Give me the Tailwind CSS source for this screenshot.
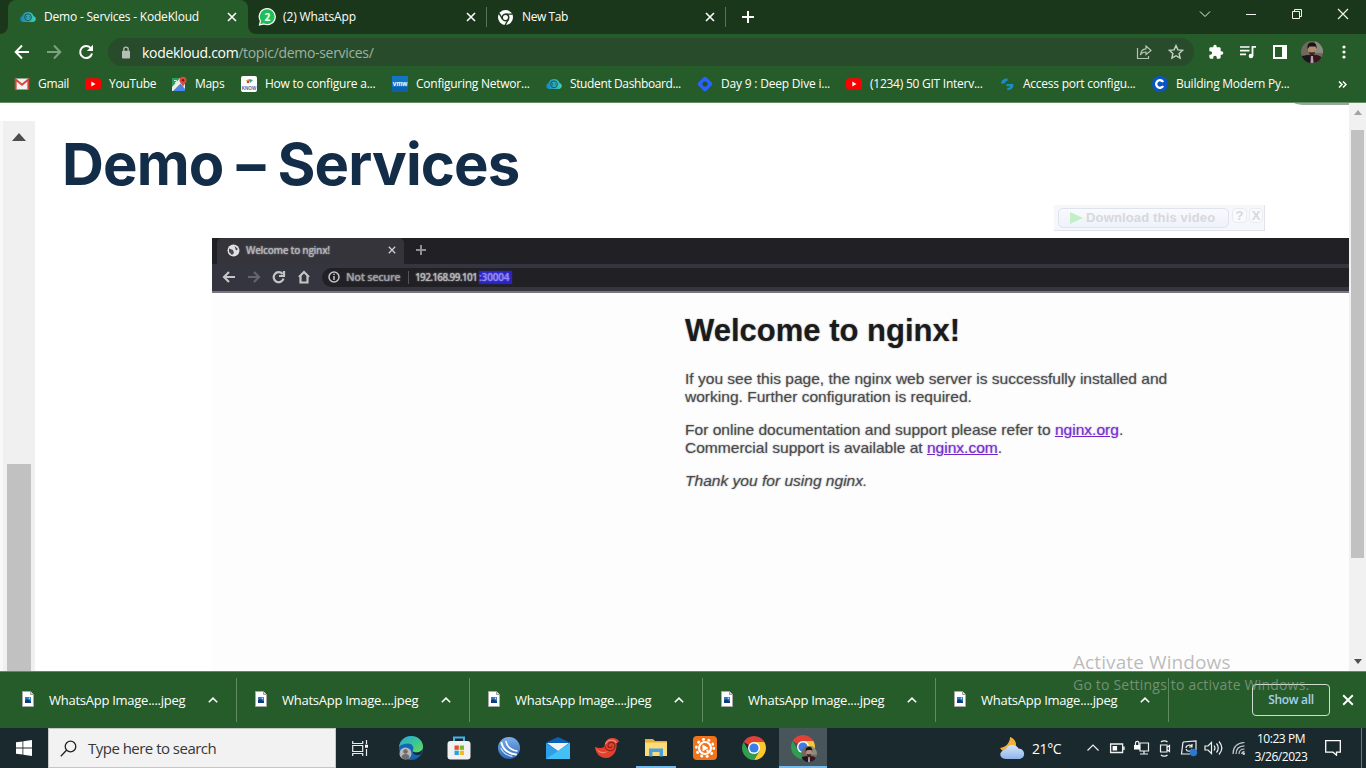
<!DOCTYPE html>
<html lang="en">
<head>
<meta charset="utf-8">
<title>Demo - Services - KodeKloud</title>
<script src="https://cdn.jsdelivr.net/npm/@tailwindcss/browser@4"></script>
</head>
<body class="w-[1366px] h-[768px] overflow-hidden relative bg-white flex flex-col font-['Open_Sans',sans-serif] text-white whitespace-nowrap">
<svg class="absolute w-0 h-0">
  <defs>
    <linearGradient id="kk" x1="0" x2="1"><stop offset="0" stop-color="#1583c4"/><stop offset="1" stop-color="#3fd0b8"/></linearGradient>
    <linearGradient id="edge" x1="0" y1="0" x2="1" y2="1"><stop offset="0" stop-color="#2aa7d8"/><stop offset=".6" stop-color="#3fc98c"/><stop offset="1" stop-color="#6bdc55"/></linearGradient>
    <linearGradient id="ball" x1="0" y1="0" x2="0" y2="1"><stop offset="0" stop-color="#7fb0e6"/><stop offset="1" stop-color="#2a68c0"/></linearGradient>
    <linearGradient id="cloudg" x1="0" y1="0" x2="0" y2="1"><stop offset="0" stop-color="#d5e6fb"/><stop offset="1" stop-color="#8fb4ea"/></linearGradient>
    <clipPath id="fc"><circle cx="11" cy="11" r="11"/></clipPath>
    <symbol id="kloud" viewBox="0 0 16 16"><path d="M3.500 13C1 13 .2 11.300.2 10 .2 8.500 1.200 7.500 2.300 7.200 3 4.600 5.300 3 8 3s5 1.600 5.700 4.200C15 7.500 15.800 8.500 15.800 10c0 1.500-1.100 3-3.300 3z" fill="url(#kk)"/><circle cx="8" cy="8.300" r="3.400" fill="none" stroke="#1f5b45" stroke-width="1"/><path d="M7 7.200 5.900 8.300 7 9.400M9 7.200l1.100 1.100L9 9.400" fill="none" stroke="#1f5b45" stroke-width=".8"/></symbol>
    <symbol id="x" viewBox="0 0 10 10"><path d="M1 1l8 8M9 1L1 9" stroke="currentColor" stroke-width="1.600" fill="none"/></symbol>
    <symbol id="yt" viewBox="0 0 16 16"><rect y="2.200" width="16" height="11.600" rx="3" fill="#f00"/><path d="M6.300 5.600v4.800L10.500 8z" fill="#fff"/></symbol>
    <symbol id="up" viewBox="0 0 10 6"><path d="M.8 5.300 5 1.200l4.200 4.100" stroke="currentColor" stroke-width="1.600" fill="none"/></symbol>
    <symbol id="file" viewBox="0 0 12 16"><path d="M.5.5h8l3 3v12H.5z" fill="#fff" stroke="#a9a9a9"/><path d="M8.500.5v3h3" fill="#ddd" stroke="#888" stroke-width=".8"/><rect x="3" y="6" width="6" height="6" fill="#2a7bd0"/><path d="M3 12V9.500L5 8l4 2.500V12z" fill="#123a73"/><circle cx="7.500" cy="7.300" r=".8" fill="#cde8ff"/></symbol>
    <symbol id="chrome" viewBox="0 0 24 24"><path d="M12 12 1.610 6A12 12 0 0 1 22.390 6z" fill="#e04236"/><path d="M22.390 6A12 12 0 0 1 12 24l5.200-9L12 6z" fill="#fbc82f"/><path d="M1.610 6A12 12 0 0 0 12 24l5.200-9L12 12 6.800 15z" fill="#2f9e4f"/><circle cx="12" cy="12" r="6" fill="#fff"/><circle cx="12" cy="12" r="4.600" fill="#3a7ce8"/></symbol>
    <symbol id="face" viewBox="0 0 22 22"><g clip-path="url(#fc)"><rect width="22" height="22" fill="#6f6a5c"/><rect x="14" width="8" height="12" fill="#8c8b80"/><path d="M0 22c0-7 5-8 9-8l5 0c5 0 8 2 8 8z" fill="#3a1220"/><path d="M0 22V15l8-1 2 8z" fill="#15171d"/><ellipse cx="11" cy="8.500" rx="4" ry="5.200" fill="#b48a74"/><path d="M6.500 8C6 3 8 1.500 11 1.500S16 3 15.500 8L14.500 5.500h-6z" fill="#161312"/><path d="M8 10.500c1 1.200 5 1.200 6 0 0 3-1.500 4-3 4s-3-1-3-4z" fill="#352722"/><path d="M10 15h2l.5 7h-3z" fill="#a9a5a8"/></g></symbol>
  </defs>
</svg>

<!-- Tab strip -->
<header class="h-[34px] shrink-0 bg-[#1b371b] flex items-stretch text-[12px]">
  <div class="w-[8px] bg-[#265c2a]"><div class="h-full bg-[#1b371b] rounded-br-[8px]"></div></div>
  <div class="w-[240px] bg-[#265c2a] rounded-t-[8px] flex items-center pl-[12px]">
    <svg class="w-[16px] h-[16px]"><use href="#kloud"/></svg>
    <span class="ml-[8px] w-[183px] tracking-[-0.2px]">Demo - Services - KodeKloud</span>
    <svg class="w-[10px] h-[10px]"><use href="#x"/></svg>
  </div>
  <div class="w-[239px] bg-[#265c2a]">
    <div class="h-full bg-[#1b371b] rounded-bl-[8px] flex items-center pl-[10px]">
      <svg class="w-[18px] h-[18px]" viewBox="0 0 18 18"><path d="M1.500 17 2.500 13A8 8 0 1 1 6 16z" fill="#1fbf55" stroke="#fff" stroke-width="1.200"/><text x="9.300" y="12.500" text-anchor="middle" font-size="10" font-weight="700" fill="#fff" font-family="Open Sans">2</text></svg>
      <span class="ml-[7px] w-[183px] tracking-[-0.13px]">(2) WhatsApp</span>
      <svg class="w-[10px] h-[10px]"><use href="#x"/></svg>
    </div>
  </div>
  <div class="flex items-center w-[239px]">
    <div class="w-px h-[20px] bg-[#58735a] mr-[11px] -ml-px"></div>
    <svg class="w-[15px] h-[15px]" viewBox="0 0 24 24"><circle cx="12" cy="12" r="12" fill="#fff"/><circle cx="12" cy="12" r="5.200" fill="#fff" stroke="#1b371b" stroke-width="2.400"/><path d="M12 6.500h11M7.200 14.700 1.700 5.400M16.800 14.700 11.500 24" stroke="#1b371b" stroke-width="2.200"/></svg>
    <span class="ml-[9px] w-[183px] tracking-[-0.4px]">New Tab</span>
    <svg class="w-[10px] h-[10px]"><use href="#x"/></svg>
  </div>
  <div class="flex items-center flex-1">
    <div class="w-px h-[20px] bg-[#58735a] -ml-px"></div>
    <svg class="w-[12px] h-[12px] ml-[16px]" viewBox="0 0 12 12"><path d="M6 0v12M0 6h12" stroke="#fff" stroke-width="2"/></svg>
  </div>
  <div class="flex items-start pt-[8px] w-[167px] text-[#eef3ee]">
    <svg class="w-[12px] h-[12px] mr-[34px]" viewBox="0 0 12 12"><path d="M1 3.500 6 8.500l5-5" stroke="currentColor" fill="none"/></svg>
    <svg class="w-[12px] h-[12px] mr-[34px]" viewBox="0 0 12 12"><path d="M1 6.500h10" stroke="currentColor" fill="none"/></svg>
    <svg class="w-[12px] h-[12px] mr-[34px]" viewBox="0 0 12 12"><path d="M1.500 3.500h7v7h-7zM3.500 3.500v-2h7v7h-2" stroke="currentColor" fill="none"/></svg>
    <svg class="w-[12px] h-[12px]" viewBox="0 0 12 12"><path d="M1 1l10 10M11 1 1 11" stroke="currentColor" stroke-width="1.200" fill="none"/></svg>
  </div>
</header>

<!-- Toolbar -->
<div class="h-[36px] shrink-0 bg-[#265c2a] flex items-center">
  <svg class="w-[16px] h-[16px] ml-[14px]" viewBox="0 0 16 16"><path d="M15 8H2M8 1.500 1.700 8 8 14.500" stroke="#fff" stroke-width="2" fill="none"/></svg>
  <svg class="w-[16px] h-[16px] ml-[16px]" viewBox="0 0 16 16"><path d="M1 8h13M8 1.500 14.300 8 8 14.500" stroke="#7fa081" stroke-width="2" fill="none"/></svg>
  <svg class="w-[16px] h-[16px] ml-[16px]" viewBox="0 0 16 16"><path d="M13 4.500A6 6 0 1 0 14 9.500" stroke="#fff" stroke-width="2" fill="none"/><path d="M15 .8V7H8.800z" fill="#fff"/></svg>
  <div class="ml-[14px] w-[1086px] h-[28px] rounded-full bg-[#284b2b] flex items-center pl-[13px] pr-[10px] text-[14px]">
    <svg class="w-[10px] h-[13px]" viewBox="0 0 10 13"><rect x="1" y="4.800" width="8" height="7.600" rx="1" fill="#b5bfb6"/><path d="M2.800 5V3.300a2.200 2.200 0 0 1 4.400 0V5" stroke="#b5bfb6" stroke-width="1.300" fill="none"/></svg>
    <span class="ml-[11px] tracking-[-0.32px] flex-1">kodekloud.com<span class="text-[#9fb1a1]">/topic/demo-services/</span></span>
    <svg class="w-[16px] h-[16px]" viewBox="0 0 16 16"><path d="M1.500 4v10.500h11V12M10 2l5 4.500-5 4V8C7 8 5.500 9 4.500 11 4.800 7 7 5 10 4.800z" fill="none" stroke="#b3c4b4" stroke-width="1.200"/></svg>
    <svg class="w-[16px] h-[16px] ml-[16px]" viewBox="0 0 16 16"><path d="m8 1.600 1.900 4.300 4.700.5-3.500 3.100 1 4.600L8 11.700l-4.100 2.400 1-4.600-3.500-3.100 4.700-.5z" fill="none" stroke="#c5d3c6" stroke-width="1.400"/></svg>
  </div>
  <svg class="w-[16px] h-[16px] ml-[14px]" viewBox="0 0 24 24"><path d="M20.500 11H19V7c0-1.100-.9-2-2-2h-4V3.500a2.500 2.500 0 0 0-5 0V5H4c-1.100 0-2 .9-2 2v3.800h1.500a2.700 2.700 0 0 1 0 5.400H2V20c0 1.100.9 2 2 2h3.800v-1.500a2.700 2.700 0 0 1 5.400 0V22H17c1.100 0 2-.9 2-2v-4h1.500a2.500 2.500 0 0 0 0-5z" fill="#fff"/></svg>
  <svg class="w-[16px] h-[14px] ml-[16px]" viewBox="0 0 16 14"><path d="M0 2h9.500M0 5.700h9.500M0 9.400h6" stroke="#fff" stroke-width="1.700"/><path d="M12.500 11V1.800H16" stroke="#fff" stroke-width="1.800" fill="none"/><circle cx="11" cy="11" r="2.300" fill="#fff"/></svg>
  <svg class="w-[14px] h-[14px] ml-[17px]" viewBox="0 0 14 14"><path d="M0 0h14v14H0zM2 2v10h7V2z" fill="#fff" fill-rule="evenodd"/></svg>
  <svg class="w-[22px] h-[22px] ml-[14px]"><use href="#face"/></svg>
  <svg class="w-[4px] h-[14px] ml-[19px]" viewBox="0 0 4 14" fill="#fff"><circle cx="2" cy="2" r="1.600"/><circle cx="2" cy="7" r="1.600"/><circle cx="2" cy="12" r="1.600"/></svg>
</div>

<!-- Bookmarks -->
<nav class="h-[33px] shrink-0 bg-[#265c2a] border-b border-[#5f8b62] flex items-center pl-[14px] pb-[4px] text-[12px]">
  <a class="flex items-center gap-[8px] w-[71px]"><svg class="w-[16px] h-[16px]" viewBox="0 0 16 16"><rect x="1" y="2.500" width="14" height="11" rx="1" fill="#f2f2f2"/><path d="M1.700 13.500V3.600L8 8.700l6.300-5.100v9.900" fill="none" stroke="#d9443a" stroke-width="1.900"/></svg><span class="tracking-[-0.3px]">Gmail</span></a>
  <a class="flex items-center gap-[8px] w-[86px]"><svg class="w-[16px] h-[16px]"><use href="#yt"/></svg><span class="tracking-[-0.3px]">YouTube</span></a>
  <a class="flex items-center gap-[8px] w-[70px]"><svg class="w-[16px] h-[16px]" viewBox="0 0 16 16"><rect x="1" y="2" width="13" height="13" rx="1" fill="#e5e8ea"/><path d="M1 2h8L1 11z" fill="#27a05b"/><path d="M1 15 9 7l5 6v2z" fill="#4a86e8"/><path d="M1 12 9.500 3.500l2 2L2 15H1z" fill="#f4f0e0"/><path d="M3 4.500h2.500v2H4" stroke="#d8efdf" fill="none"/><path d="M12 11C11 8 8.500 7 8.500 4.200a3.500 3.500 0 0 1 7 0C15.500 7 13 8 12 11z" fill="#dd4b3e"/><circle cx="12" cy="4.200" r="1.300" fill="#7c1d16"/></svg><span class="tracking-[-0.3px]">Maps</span></a>
  <a class="flex items-center gap-[8px] w-[151px]"><svg class="w-[16px] h-[16px]" viewBox="0 0 16 16"><rect width="16" height="16" rx="2" fill="#fff"/><path d="M4 4.500 8 3.200l2 2z" fill="#e58d3a"/><path d="M8 3l4 1-3 3z" fill="#2aa58b"/><circle cx="7" cy="6" r="1.300" fill="#cf3d4e"/><text x="8" y="13.500" font-size="4.600" font-weight="700" text-anchor="middle" fill="#5a6690" font-family="Liberation Sans">KNOW</text></svg><span class="tracking-[-0.23px]">How to configure a...</span></a>
  <a class="flex items-center gap-[8px] w-[154px]"><svg class="w-[16px] h-[16px]" viewBox="0 0 16 16"><rect width="16" height="16" fill="#1473c2"/><rect y="11" width="16" height="5" fill="#0d60aa"/><text x="8" y="10" font-size="6.500" font-weight="700" text-anchor="middle" fill="#fff" font-family="Liberation Sans">vmw</text></svg><span class="tracking-[-0.25px]">Configuring Networ...</span></a>
  <a class="flex items-center gap-[8px] w-[151px]"><svg class="w-[16px] h-[16px]"><use href="#kloud"/></svg><span class="tracking-[-0.38px]">Student Dashboard...</span></a>
  <a class="flex items-center gap-[8px] w-[149px]"><svg class="w-[16px] h-[16px]" viewBox="0 0 16 16"><rect x="2.300" y="2.300" width="11.400" height="11.400" rx="2" transform="rotate(45 8 8)" fill="#2962ff"/><circle cx="8" cy="8" r="2.600" fill="#24502c"/></svg><span class="tracking-[-0.2px]">Day 9 : Deep Dive i...</span></a>
  <a class="flex items-center gap-[8px] w-[154px]"><svg class="w-[16px] h-[16px]"><use href="#yt"/></svg><span class="tracking-[-0.25px]">(1234) 50 GIT Interv...</span></a>
  <a class="flex items-center gap-[7px] w-[152px]"><svg class="w-[16px] h-[16px]" viewBox="0 0 16 16"><path d="M1 7.500C1.300 4 4 2.500 7.500 2.500V5C5.500 5 5 6 4.800 7.500zM6.500 8h6.800c.4 4-1.800 6.200-6 6.200V12c2 0 2.700-.5 2.700-1.700H6.500z" fill="#1b8fc4"/></svg><span class="tracking-[-0.25px]">Access port configu...</span></a>
  <a class="flex items-center gap-[8px] w-[186px]"><svg class="w-[16px] h-[16px]" viewBox="0 0 16 16"><circle cx="8" cy="8" r="8" fill="#0b53c6"/><path d="M11.200 6A3.800 3.800 0 1 0 11.200 10" fill="none" stroke="#fff" stroke-width="2.300"/></svg><span class="tracking-[-0.25px]">Building Modern Py...</span></a>
  <svg class="w-[9px] h-[7px]" viewBox="0 0 9 7"><path d="M1 .5 4 3.500 1 6.500M5 .5l3 3-3 3" fill="none" stroke="#fff" stroke-width="1.500"/></svg>
</nav>

<!-- Page -->
<main class="h-[568px] shrink-0 flex text-black relative overflow-hidden">
  <aside class="w-[35px] mt-[18px] pl-[3px] bg-[#f8f8f9]">
    <div class="h-full bg-[#f0f0f0] flex flex-col justify-between items-start">
      <svg class="w-[14px] h-[8px] mt-[12px] ml-[9px]" viewBox="0 0 14 8"><path d="M0 8 7 0l7 8z" fill="#4d4d4d"/></svg>
      <div class="w-[24px] h-[207px] ml-[4px] bg-[#c1c1c1]"></div>
    </div>
  </aside>
  <section class="w-[1314px]">
    <h1 class="h-[135px] pl-[27px] pt-[26px] font-['Inter',sans-serif] font-bold text-[58px] leading-[70px] tracking-[-0.85px] text-[#132c47]">Demo – Services</h1>
    <div class="ml-[177px] h-[433px] bg-[#fdfdfe] overflow-hidden">
      <div class="h-[26px] bg-[#212025] flex items-stretch text-[10px] text-[#bcbcc0]/80">
        <div class="ml-[5px] w-[187px] bg-[#35343b] rounded-t-[5px] flex items-center pl-[10px] pb-[2px]">
          <svg class="w-[13px] h-[13px]" viewBox="0 0 13 13"><circle cx="6.500" cy="6.500" r="6" fill="#e0e0e2"/><path d="M2 4.500 6 6l1 3-2 2-3-3zM7.500 2l3.500 3-2 1.500z" fill="#4a494f"/></svg>
          <span class="ml-[6px] w-[142px] tracking-[-0.3px] font-semibold [text-shadow:0_0_1.5px_#bcbcc0]">Welcome to nginx!</span>
          <svg class="w-[8px] h-[8px] text-[#d0d0d4]"><use href="#x"/></svg>
        </div>
        <svg class="w-[10px] h-[10px] mt-[7px] ml-[12px]" viewBox="0 0 10 10"><path d="M5 0v10M0 5h10" stroke="#8f8f93" stroke-width="2"/></svg>
      </div>
      <div class="h-[29px] bg-[#35353f] border-b-2 border-[#77767c] flex items-center pb-px text-[#c8c8cc] text-[11px]">
        <svg class="w-[92px] h-[14px] ml-[10px]" viewBox="0 0 92 14"><g fill="none" stroke="#c5c5c9" stroke-width="2.200"><path d="M13 7H2M7 2 2 7l5 5"/><path d="M26 7h10M32 2l5 5-5 5" stroke="#66656d"/><path d="M60.500 4a5 5 0 1 0 1 4.500M62 1v5h-5"/><path d="M77 7l5-5 5 5M78.500 6v6.500h7V6"/></g></svg>
        <div class="ml-[8px] flex-1 h-[19px] rounded-l-full bg-[#212025] flex items-center pl-[6px]">
          <svg class="w-[12px] h-[12px]" viewBox="0 0 12 12"><circle cx="6" cy="6" r="5" fill="none" stroke="#c5c5c9" stroke-width="1.500"/><path d="M6 5v4M6 2.800v1.300" stroke="#c5c5c9" stroke-width="1.500"/></svg>
          <span class="ml-[6px] w-[62px] tracking-[-0.35px] font-semibold [text-shadow:0_0_1.5px_#a8a8ac] text-[#a8a8ac]/80">Not secure</span>
          <span class="w-px h-[13px] bg-[#55545c]"></span>
          <span class="ml-[6px] w-[64px] text-[10px] tracking-[-0.65px] font-semibold text-[#c0c0c4]/80 [text-shadow:0_0_1.5px_#c0c0c4]">192.168.99.101</span>
          <span class="w-[33px] h-[13px] leading-[13px] bg-[#2a22c4] shadow-[0_0_1px_#2a22c4] text-[10px] tracking-[-0.15px] font-semibold text-[#9a94f0]/80 [text-shadow:0_0_1.5px_#9a94f0]">:30004</span>
        </div>
      </div>
      <article class="pl-[473px] pt-[20px] font-['Liberation_Sans',sans-serif] text-[15.55px] leading-[18px] text-[#3a3a3c]/85 [text-shadow:0_0_1.5px_#00000080]">
        <h2 class="text-[31px] leading-[36px] font-bold text-[#0c0c0e]/90">Welcome to nginx!</h2>
        <p class="mt-[21px]">If you see this page, the nginx web server is successfully installed and<br>working. Further configuration is required.</p>
        <p class="mt-[15px]">For online documentation and support please refer to <a class="underline text-[#6a1bc4]/85 [text-shadow:0_0_1.5px_#6a1bc4b0]">nginx.org</a>.<br>Commercial support is available at <a class="underline text-[#6a1bc4]/85 [text-shadow:0_0_1.5px_#6a1bc4b0]">nginx.com</a>.</p>
        <p class="mt-[15px] italic">Thank you for using nginx.</p>
      </article>
    </div>
  </section>
  <aside class="w-[17px] bg-[#f1f1f1] flex flex-col items-center">
    <svg class="w-[8px] h-[5px] mt-[7px]" viewBox="0 0 8 5"><path d="M0 5 4 0l4 5z" fill="#a3a3a3"/></svg>
    <div class="w-[13px] h-[428px] mt-[15px] bg-[#c1c1c1]"></div>
    <svg class="w-[8px] h-[5px] mt-[101px]" viewBox="0 0 8 5"><path d="M0 0h8L4 5z" fill="#505050"/></svg>
  </aside>
  <!-- corner of the page's floating header -->
  <svg class="absolute left-[1294px] top-0 w-[55px] h-[3px]" viewBox="0 0 55 3"><path d="M0 0h55v2H12C7 2 3 1.500 0 0z" fill="#a0a3a0"/></svg>
  <!-- download helper floating over the video -->
  <div class="absolute left-[1054px] top-[102px] w-[211px] h-[26px] bg-[#f6f7fb] border-r border-b border-[#e0e2ec] flex items-start pl-[4px] pt-[3px] font-['Liberation_Sans',sans-serif] font-bold text-[13px] text-[#d6d8de]">
    <div class="w-[171px] h-[20px] rounded-[5px] border border-[#dde4f0] bg-linear-to-b from-[#f9fafd] to-[#eef2fa] flex items-center pl-[11px]">
      <svg class="w-[13px] h-[12px]" viewBox="0 0 13 12"><path d="M0 0 13 6 0 12z" fill="#c3efc6"/></svg>
      <span class="ml-[3px] tracking-[0.15px]">Download this video</span>
    </div>
    <div class="ml-[3px] w-[15px] h-[15px] rounded border border-[#e9ebf1] bg-[#f9fafc] text-center leading-[14px]">?</div>
    <div class="ml-[2px] w-[14px] h-[15px] rounded border border-[#e9ebf1] bg-[#f9fafc] text-center leading-[13px]">X</div>
  </div>
</main>

<!-- Download shelf -->
<div class="h-[57px] shrink-0 bg-[#265c2a] border-t border-[#5f8b62] flex items-center text-[13px]">
  <div class="w-[237px] h-[44px] border-r border-[#5f8b62] flex items-center pl-[22px]"><svg class="w-[12px] h-[16px] -mt-[3px]"><use href="#file"/></svg><span class="ml-[15px] mt-[2px] w-[159px] tracking-[-0.26px]">WhatsApp Image....jpeg</span><svg class="w-[10px] h-[6px]"><use href="#up"/></svg></div>
  <div class="w-[233px] h-[44px] border-r border-[#5f8b62] flex items-center pl-[18px]"><svg class="w-[12px] h-[16px] -mt-[3px]"><use href="#file"/></svg><span class="ml-[15px] mt-[2px] w-[159px] tracking-[-0.26px]">WhatsApp Image....jpeg</span><svg class="w-[10px] h-[6px]"><use href="#up"/></svg></div>
  <div class="w-[233px] h-[44px] border-r border-[#5f8b62] flex items-center pl-[18px]"><svg class="w-[12px] h-[16px] -mt-[3px]"><use href="#file"/></svg><span class="ml-[15px] mt-[2px] w-[159px] tracking-[-0.26px]">WhatsApp Image....jpeg</span><svg class="w-[10px] h-[6px]"><use href="#up"/></svg></div>
  <div class="w-[233px] h-[44px] border-r border-[#5f8b62] flex items-center pl-[18px]"><svg class="w-[12px] h-[16px] -mt-[3px]"><use href="#file"/></svg><span class="ml-[15px] mt-[2px] w-[159px] tracking-[-0.26px]">WhatsApp Image....jpeg</span><svg class="w-[10px] h-[6px]"><use href="#up"/></svg></div>
  <div class="w-[233px] h-[44px] border-r border-[#5f8b62] flex items-center pl-[18px]"><svg class="w-[12px] h-[16px] -mt-[3px]"><use href="#file"/></svg><span class="ml-[15px] mt-[2px] w-[159px] tracking-[-0.26px]">WhatsApp Image....jpeg</span><svg class="w-[10px] h-[6px]"><use href="#up"/></svg></div>
  <button class="ml-[83px] w-[78px] h-[32px] -mt-px rounded-[4px] border border-[#cfdccf] text-[12px] font-semibold text-[#a8d0ee] tracking-[-0.3px]">Show all</button>
  <svg class="w-[12px] h-[12px] ml-[12px]"><use href="#x"/></svg>
</div>

<!-- Taskbar -->
<footer class="h-[40px] shrink-0 bg-[#1a292e] flex items-stretch">
  <div class="w-[48px] flex items-center justify-center"><svg class="w-[16px] h-[16px]" viewBox="0 0 16 16"><path d="M0 2.300 6.500 1.400V7.600H0zM7.300 1.300 16 0v7.600H7.300zM0 8.400h6.500v6.200L0 13.700zM7.300 8.400H16V16L7.300 14.700z" fill="#fff"/></svg></div>
  <div class="w-[288px] bg-[#f2f2f2] border border-[#c4c6c7] flex items-center pl-[11px] text-[15px] text-[#33383b]">
    <svg class="w-[17px] h-[17px]" viewBox="0 0 17 17"><circle cx="10.500" cy="6.500" r="5.300" fill="none" stroke="#222" stroke-width="1.300"/><path d="M6.500 10.300.8 16.200" stroke="#222" stroke-width="1.300"/></svg>
    <span class="ml-[11px] tracking-[-0.52px]">Type here to search</span>
  </div>
  <div class="w-[48px] flex items-center justify-center"><svg class="w-[17px] h-[17px]" viewBox="0 0 17 17"><path d="M.7 1v2.500h10V1M.7 16v-2.500h10V16M.7 5.500h10v6H.7zM14.500 0v4M14.500 9v7" fill="none" stroke="#e8eced" stroke-width="1.200"/><rect x="13" y="4.700" width="3" height="3" fill="#fff"/></svg></div>
  <div class="w-[52px] flex items-center justify-center"><svg class="w-[24px] h-[24px] ml-[2px]" viewBox="0 0 24 24"><circle cx="12" cy="12" r="12" fill="#1565b5"/><path d="M0 11C1 4 6 0 12 0c7 0 12 5 12 10.500 0 4-3 6-6.500 6-3 0-4.500-1-3.500-2.500 1.500-3-1-6.500-5-6.500C5 7.500 1.500 9 0 11z" fill="url(#edge)"/><path d="M14 14c-1 1.500.5 2.500 3.500 2.500 2.500 0 5-1.300 6-3.500-.3 2-1 4-2 5.500-4 1.500-9-.5-7.500-4.500z" fill="#1a292e"/><circle cx="6.500" cy="17.500" r="6" fill="#b8b8b8"/><circle cx="6.500" cy="15.500" r="2.300" fill="#6d6d6d"/><path d="M2.500 21c.5-4 7.500-4 8 0-2 3-6 3-8 0z" fill="#6d6d6d"/></svg></div>
  <div class="w-[48px] flex items-center justify-center"><svg class="w-[24px] h-[24px] -ml-[2px]" viewBox="0 0 24 24"><path d="M7 6V1.500h10V6" fill="none" stroke="#42b4e6" stroke-width="2"/><rect x=".5" y="5" width="23" height="18.500" rx="3" fill="#f1f1f1"/><path d="M7.500 9.500h4.300v4.300H7.500z" fill="#e34f2b"/><path d="M12.700 9.500H17v4.300h-4.300z" fill="#7cb82f"/><path d="M7.500 14.700h4.300V19H7.500z" fill="#2aa3dd"/><path d="M12.700 14.700H17V19h-4.300z" fill="#f5b922"/></svg></div>
  <div class="w-[50px] flex items-center justify-center"><svg class="w-[22px] h-[22px]" viewBox="0 0 22 22"><circle cx="11" cy="11" r="11" fill="url(#ball)"/><g fill="none" stroke="#fff" stroke-linecap="round"><path d="M3.500 6C5 12 10 16.500 18 17.500" stroke-width="2"/><path d="M8 4.500C9 9.500 13 13 19 14" stroke-width="1.500"/><path d="M3 11.500C5 15.500 9 18.500 14 19.300" stroke="#cfe1f6" stroke-width="1.200"/></g></svg></div>
  <div class="w-[48px] flex items-center justify-center"><svg class="w-[24px] h-[22px]" viewBox="0 0 24 22"><path d="M0 5.500 12 0l12 5.500V12H0z" fill="#0d5fb3"/><path d="M0 6v16h24V6L12 14z" fill="#2f9ee8"/><path d="M0 22 24 6v16z" fill="#43c0f5"/><path d="M1 6h22l-11 8z" fill="#eef4f8"/></svg></div>
  <div class="w-[50px] flex items-center justify-center"><svg class="w-[24px] h-[20px]" viewBox="0 0 24 20"><path d="M0 9c4 1.500 8 1.500 9.500-1C10 3 13 0 17 0c4 0 7 2 7 4l-2.500 1c1 8-3.500 15-10.500 15C5 20 1 16 0 9z" fill="#e2412f"/><path d="M0 9c3 5 9 6 13 4-4 4-10 3-13-4z" fill="#f4806e"/><path d="M10 8c0 6 10 6.500 10 0 0-4.500-7-5-7-.5 0 2.800 4 3 4.200.3" fill="none" stroke="#8e1f18" stroke-width="1.100"/><path d="M10.500 6c2-5 9-5 11-1" fill="none" stroke="#f58b78" stroke-width="1.200"/></svg></div>
  <div class="w-[40px] ml-[4px] mr-[4px] border-b-2 border-[#76b9ed] flex items-center justify-center"><svg class="w-[22px] h-[19px]" viewBox="0 0 22 19"><path d="M0 1h8l2 2h12v15H0z" fill="#e6ae34"/><path d="M0 4.500h22V18H0z" fill="#fbdc79"/><path d="M4 18.500v-8h14v8h-3.500v-4.500h-7v4.500z" fill="#4aa0dc"/></svg></div>
  <div class="w-[50px] flex items-center justify-center"><svg class="w-[24px] h-[24px]" viewBox="0 0 24 24"><rect width="24" height="24" rx="4" fill="#f2741a"/><circle cx="12" cy="12" r="8.700" fill="none" stroke="#fff" stroke-width="2.600" stroke-linecap="round" stroke-dasharray=".6 4.950"/><circle cx="12" cy="12" r="6" fill="none" stroke="#fff" stroke-width="2.200"/><path d="M9.500 8.500 15.500 12l-6 3.500z" fill="#fff"/><circle cx="14.500" cy="14.800" r="1.200" fill="#fff"/></svg></div>
  <div class="w-[48px] flex items-center justify-center"><svg class="w-[24px] h-[24px]"><use href="#chrome"/></svg></div>
  <div class="w-[48px] ml-px bg-[#48555a] border-b-2 border-[#76b9ed] flex items-center justify-center relative"><svg class="w-[24px] h-[24px]"><use href="#chrome"/></svg><svg class="absolute left-[22px] top-[18px] w-[16px] h-[16px]" viewBox="0 0 22 22"><use href="#face" width="22" height="22"/></svg></div>
  <div class="flex-1"></div>
  <div class="flex items-center w-[86px] text-[14px]">
    <svg class="w-[25px] h-[24px]" viewBox="0 0 25 24"><path d="M10 1C10 7 6 11 0 12c2 3 5 4 8 4 5 0 8-4 8-8 0-3-3-6-6-7z" fill="#f3b13c"/><path d="M6 23c-8 0-7-9-.5-9C7 8 16 7 18.500 12.500c7 0 8 10.500 0 10.500z" fill="url(#cloudg)"/></svg>
    <span class="ml-[7px] tracking-[-0.4px]">21°C</span>
  </div>
  <svg class="w-[146px] h-[20px] self-center" viewBox="0 0 146 20" fill="none" stroke="#eef1f2" stroke-width="1.200">
    <path d="M1.500 12.500 7 7l5.500 5.500"/>
    <path d="M24.600 6h12v8.500h-12zM38 8.500v3.500" stroke-width="1.300"/><path d="M26.600 8h4.500v4.500h-4.500z" fill="#fff" stroke="none"/>
    <path d="M54 5h8.500v8H54zM58 13v3M54 16h8"/><path d="M49.500 7V5a1.700 1.700 0 0 1 3.400 0V7"/><path d="M48 7h6v4.500h-6z" fill="#fff" stroke="none"/>
    <path d="M74.500 7H81v7h-6.500zM81 9.500l2.500-2v6L81 11.500M75 4c1.500-1.500 5-1.500 6.500 0M75 17c1.500 1.500 5 1.500 6.500 0"/>
    <path d="M97 4l13-1v9M97 4l-1.500 12H104M100 10c0-3 5-4 6-1M106 6v3h-3M106 11c-1 3-5 3-6 0"/><circle cx="107.500" cy="14.500" r="3.700" fill="#2a78cf" stroke="none"/>
    <path d="M119 8h3l3.500-3.500v11L122 12h-3zM128 7.500c1.200 1.500 1.200 3.500 0 5M130.500 5.500c2.300 2.500 2.300 6.500 0 9M133 3.500c3.500 4 3.500 9 0 13"/>
  </svg>
  <div class="flex items-center w-[20px]"><svg class="w-[13px] h-[14px]" viewBox="0 0 13 14" fill="none" stroke="#c5cbcd" stroke-width="1.200"><path d="M1 13C1 6 5 2 12.500 1.500M4 13c0-5 3-8 8.500-8.200M7 13c0-3 2-5 5.500-5M9.800 13c0-1.500 1-2.500 2.700-2.500"/><circle cx="11.700" cy="12.600" r=".8" fill="#fff"/></svg></div>
  <div class="w-[58px] flex flex-col items-center justify-center text-[12px] leading-[18px] tracking-[-0.45px]"><span>10:23 PM</span><span>3/26/2023</span></div>
  <div class="w-[51px] flex items-center pl-[15px]"><svg class="w-[16px] h-[16px]" viewBox="0 0 16 16"><path d="M.7.7h14.600v11.500H11.500v3L8 12.200H.7z" fill="none" stroke="#fff" stroke-width="1.300"/></svg></div>
  <div class="w-[5px] border-l border-[#69767a]"></div>
</footer>

<!-- Activation watermark -->
<div class="absolute left-[1073px] top-[650px] text-[#8f8f8f]/60">
  <p class="text-[19px] leading-[24px] tracking-[0.1px]">Activate Windows</p>
  <p class="text-[14px] leading-[20px] mt-px tracking-[0.2px] text-[#aab4aa]/60">Go to Settings to activate Windows.</p>
</div>
</body>
</html>
